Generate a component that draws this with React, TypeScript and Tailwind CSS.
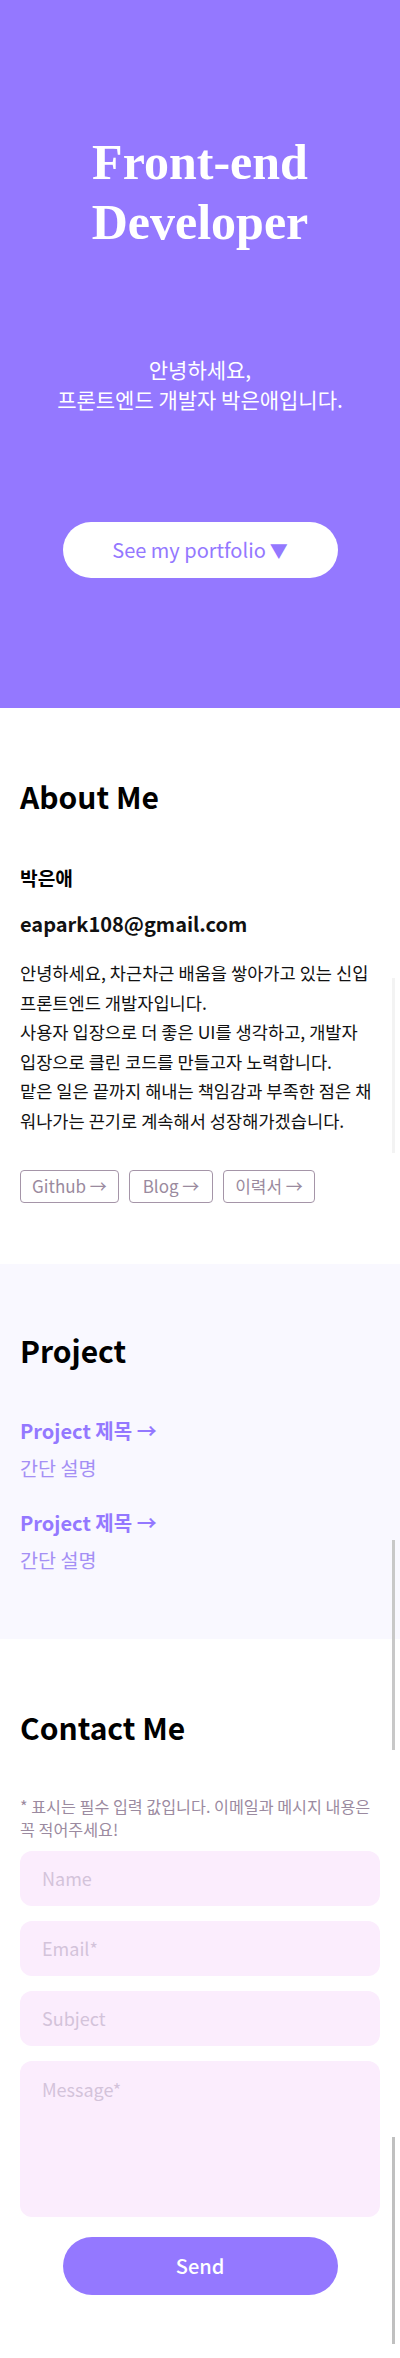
import React from "react";

const sans = {
  fontFamily: '"Noto Sans CJK KR", "Noto Sans", sans-serif',
};

const links = [
  { label: "Github", w: "w-[99px]" },
  { label: "Blog", w: "w-[84px]" },
  { label: "이력서", w: "w-[92px]" },
];

const projects = [
  { title: "Project 제목", desc: "간단 설명" },
  { title: "Project 제목", desc: "간단 설명" },
];

// lines broken where the reference breaks them
const intro = [
  "안녕하세요, 차근차근 배움을 쌓아가고 있는 신입",
  "프론트엔드 개발자입니다.",
  "사용자 입장으로 더 좋은 UI를 생각하고, 개발자",
  "입장으로 클린 코드를 만들고자 노력합니다.",
  "맡은 일은 끝까지 해내는 책임감과 부족한 점은 채",
  "워나가는 끈기로 계속해서 성장해가겠습니다.",
];

const Hero = () => {
  return (
    <section className="flex h-[708px] flex-col items-center bg-[#9478ff] pt-[132px] text-white">
      <h1 className="text-center font-['Liberation_Serif',serif] text-[50px] font-bold leading-[60px]">
        Front-end
        <br />
        Developer
      </h1>
      <p className="mt-[102px] text-center text-[21px] leading-[30px]">
        안녕하세요,
        <br />
        프론트엔드 개발자 박은애입니다.
      </p>
      <button className="mt-[108px] flex h-[56px] w-[275px] items-center justify-center gap-1 rounded-full bg-white text-[20px] font-normal text-[#9478ff]">
        See my portfolio
        <span className="text-[18px]">▼</span>
      </button>
    </section>
  );
};

const About = () => {
  return (
    <section className="bg-white px-5 pb-[61px] pt-[66px]">
      <h2 className="text-[30px] font-bold leading-[44px] text-black">About Me</h2>
      <h3 className="mt-[46px] text-[19.2px] font-bold leading-[28px] text-black">박은애</h3>
      <p className="mt-[18px] text-[20px] font-bold leading-[28px] text-[#111]">
        eapark108@gmail.com
      </p>
      <p className="mt-[20px] text-[17.6px] leading-[29.6px] text-[#111]">
        {intro.map((line, i) => (
          <span key={i} className="block whitespace-nowrap">
            {line}
          </span>
        ))}
      </p>
      <div className="mt-[34px] flex gap-[10px]">
        {links.map((l) => (
          <a
            key={l.label}
            className={`${l.w} flex h-[33px] items-center justify-center rounded-[4px] border border-[#a595a8] text-[17px] text-[#9a8a9e]`}
          >
            {l.label} →
          </a>
        ))}
      </div>
    </section>
  );
};

const Project = () => {
  return (
    <section className="bg-[#f9f8ff] px-5 pb-[64px] pt-[64px]">
      <h2 className="text-[30px] font-bold leading-[44px] text-black">Project</h2>
      <div className="mt-[44px] flex flex-col gap-[25px]">
        {projects.map((p, i) => (
          <div key={i} className="flex flex-col gap-[7px]">
            <a className="text-[20px] font-bold leading-[30px] text-[#9478ff]">{p.title} →</a>
            <p className="text-[19.6px] leading-[30px] text-[#a48ff5]">{p.desc}</p>
          </div>
        ))}
      </div>
    </section>
  );
};

const Contact = () => {
  const input =
    "h-[55px] w-full rounded-[12px] bg-[#fbedfd] px-[22px] text-[18px] outline-none placeholder:text-[#d3c3da]";
  return (
    <section className="bg-white px-5 pb-[63px] pt-[66px]">
      <h2 className="text-[30px] font-bold leading-[44px] text-black">Contact Me</h2>
      <p className="mt-[46px] text-[16.2px] leading-[23px] text-[#9b8aa0]">
        <span className="block whitespace-nowrap">
          * 표시는 필수 입력 값입니다. 이메일과 메시지 내용은
        </span>
        <span className="block">꼭 적어주세요!</span>
      </p>
      <form className="mt-[10px] flex flex-col items-center gap-[15px]">
        <input className={input} placeholder="Name" style={sans} />
        <input className={input} placeholder="Email*" style={sans} />
        <input className={input} placeholder="Subject" style={sans} />
        <textarea
          className="h-[156px] w-full resize-none rounded-[12px] bg-[#fbedfd] px-[22px] pt-[14px] text-[18px] leading-[28px] outline-none placeholder:text-[#d3c3da]"
          placeholder="Message*"
          style={sans}
        />
        <button
          type="button"
          className="mt-[5px] h-[58px] w-[275px] rounded-full bg-[#9478ff] text-[20px] font-medium text-white"
          style={sans}
        >
          Send
        </button>
      </form>
    </section>
  );
};

export default function App() {
  return (
    <div className="relative w-[400px] font-['Noto_Sans_CJK_KR','Noto_Sans',sans-serif]">
      <Hero />
      <About />
      <Project />
      <Contact />
      {/* scrollbar remnants left over from the capture */}
      <div className="absolute right-[5px] top-[978px] h-[175px] w-[3px] bg-[#f3f3f3]" />
      <div className="absolute right-[5px] top-[1540px] h-[210px] w-[3px] bg-[#c8c8c8]" />
      <div className="absolute right-[5px] top-[2137px] h-[207px] w-[3px] bg-[#c0c0c0]" />
    </div>
  );
}
